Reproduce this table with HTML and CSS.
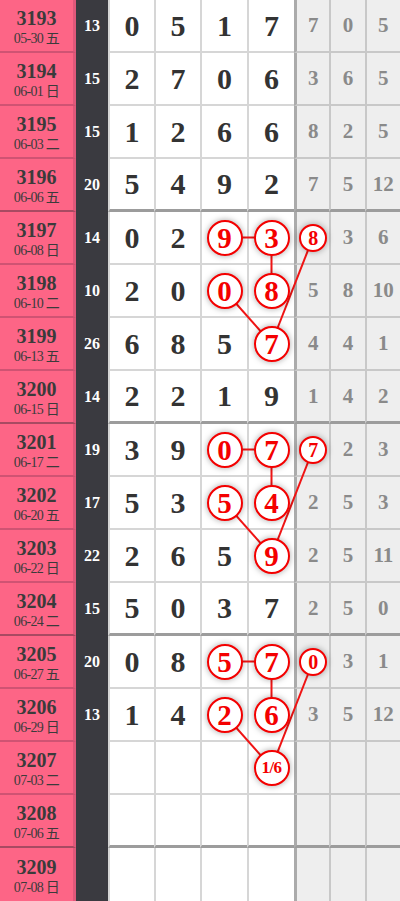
FILE: index.html
```html
<!DOCTYPE html>
<html lang="zh">
<head>
<meta charset="utf-8">
<title>走势图</title>
<link rel="stylesheet" href="styles.css">
</head>
<body>
<div class="board">
  <svg class="links" width="400" height="901" viewBox="0 0 400 901">
    <g stroke="#f01414" stroke-width="2" fill="none">
      <line x1="224.5" y1="237.5" x2="271.5" y2="237.5"/>
      <line x1="271.5" y1="237.5" x2="271.5" y2="290.5"/>
      <line x1="224.5" y1="290.5" x2="271.5" y2="343.5"/>
      <line x1="313" y1="237.5" x2="271.5" y2="343.5"/>
      <line x1="224.5" y1="449.5" x2="271.5" y2="449.5"/>
      <line x1="271.5" y1="449.5" x2="271.5" y2="502.5"/>
      <line x1="224.5" y1="502.5" x2="271.5" y2="555.5"/>
      <line x1="313" y1="449.5" x2="271.5" y2="555.5"/>
      <line x1="224.5" y1="661.5" x2="271.5" y2="661.5"/>
      <line x1="271.5" y1="661.5" x2="271.5" y2="714.5"/>
      <line x1="224.5" y1="714.5" x2="271.5" y2="767.5"/>
      <line x1="313" y1="661.5" x2="271.5" y2="767.5"/>
    </g>
  </svg>

  <div class="row">
    <div class="id"><span class="no">3193</span><span class="dt">05-30 五</span></div>
    <div class="sum">13</div>
    <div class="n">0</div><div class="n">5</div><div class="n">1</div><div class="n">7</div>
    <div class="g first">7</div><div class="g">0</div><div class="g">5</div>
  </div>
  <div class="row">
    <div class="id"><span class="no">3194</span><span class="dt">06-01 日</span></div>
    <div class="sum">15</div>
    <div class="n">2</div><div class="n">7</div><div class="n">0</div><div class="n">6</div>
    <div class="g first">3</div><div class="g">6</div><div class="g">5</div>
  </div>
  <div class="row">
    <div class="id"><span class="no">3195</span><span class="dt">06-03 二</span></div>
    <div class="sum">15</div>
    <div class="n">1</div><div class="n">2</div><div class="n">6</div><div class="n">6</div>
    <div class="g first">8</div><div class="g">2</div><div class="g">5</div>
  </div>
  <div class="row grp">
    <div class="id"><span class="no">3196</span><span class="dt">06-06 五</span></div>
    <div class="sum">20</div>
    <div class="n">5</div><div class="n">4</div><div class="n">9</div><div class="n">2</div>
    <div class="g first">7</div><div class="g">5</div><div class="g">12</div>
  </div>

  <div class="row">
    <div class="id"><span class="no">3197</span><span class="dt">06-08 日</span></div>
    <div class="sum">14</div>
    <div class="n">0</div><div class="n">2</div><div class="n"><span class="ball">9</span></div><div class="n"><span class="ball">3</span></div>
    <div class="g first"><span class="ball sm">8</span></div><div class="g">3</div><div class="g">6</div>
  </div>
  <div class="row">
    <div class="id"><span class="no">3198</span><span class="dt">06-10 二</span></div>
    <div class="sum">10</div>
    <div class="n">2</div><div class="n">0</div><div class="n"><span class="ball">0</span></div><div class="n"><span class="ball">8</span></div>
    <div class="g first">5</div><div class="g">8</div><div class="g">10</div>
  </div>
  <div class="row">
    <div class="id"><span class="no">3199</span><span class="dt">06-13 五</span></div>
    <div class="sum">26</div>
    <div class="n">6</div><div class="n">8</div><div class="n">5</div><div class="n"><span class="ball">7</span></div>
    <div class="g first">4</div><div class="g">4</div><div class="g">1</div>
  </div>
  <div class="row grp">
    <div class="id"><span class="no">3200</span><span class="dt">06-15 日</span></div>
    <div class="sum">14</div>
    <div class="n">2</div><div class="n">2</div><div class="n">1</div><div class="n">9</div>
    <div class="g first">1</div><div class="g">4</div><div class="g">2</div>
  </div>

  <div class="row">
    <div class="id"><span class="no">3201</span><span class="dt">06-17 二</span></div>
    <div class="sum">19</div>
    <div class="n">3</div><div class="n">9</div><div class="n"><span class="ball">0</span></div><div class="n"><span class="ball">7</span></div>
    <div class="g first"><span class="ball sm">7</span></div><div class="g">2</div><div class="g">3</div>
  </div>
  <div class="row">
    <div class="id"><span class="no">3202</span><span class="dt">06-20 五</span></div>
    <div class="sum">17</div>
    <div class="n">5</div><div class="n">3</div><div class="n"><span class="ball">5</span></div><div class="n"><span class="ball">4</span></div>
    <div class="g first">2</div><div class="g">5</div><div class="g">3</div>
  </div>
  <div class="row">
    <div class="id"><span class="no">3203</span><span class="dt">06-22 日</span></div>
    <div class="sum">22</div>
    <div class="n">2</div><div class="n">6</div><div class="n">5</div><div class="n"><span class="ball">9</span></div>
    <div class="g first">2</div><div class="g">5</div><div class="g">11</div>
  </div>
  <div class="row grp">
    <div class="id"><span class="no">3204</span><span class="dt">06-24 二</span></div>
    <div class="sum">15</div>
    <div class="n">5</div><div class="n">0</div><div class="n">3</div><div class="n">7</div>
    <div class="g first">2</div><div class="g">5</div><div class="g">0</div>
  </div>

  <div class="row">
    <div class="id"><span class="no">3205</span><span class="dt">06-27 五</span></div>
    <div class="sum">20</div>
    <div class="n">0</div><div class="n">8</div><div class="n"><span class="ball">5</span></div><div class="n"><span class="ball">7</span></div>
    <div class="g first"><span class="ball sm">0</span></div><div class="g">3</div><div class="g">1</div>
  </div>
  <div class="row">
    <div class="id"><span class="no">3206</span><span class="dt">06-29 日</span></div>
    <div class="sum">13</div>
    <div class="n">1</div><div class="n">4</div><div class="n"><span class="ball">2</span></div><div class="n"><span class="ball">6</span></div>
    <div class="g first">3</div><div class="g">5</div><div class="g">12</div>
  </div>
  <div class="row">
    <div class="id"><span class="no">3207</span><span class="dt">07-03 二</span></div>
    <div class="sum"></div>
    <div class="n"></div><div class="n"></div><div class="n"></div><div class="n"><span class="ball frac">1/6</span></div>
    <div class="g first"></div><div class="g"></div><div class="g"></div>
  </div>
  <div class="row grp">
    <div class="id"><span class="no">3208</span><span class="dt">07-06 五</span></div>
    <div class="sum"></div>
    <div class="n"></div><div class="n"></div><div class="n"></div><div class="n"></div>
    <div class="g first"></div><div class="g"></div><div class="g"></div>
  </div>

  <div class="row last">
    <div class="id"><span class="no">3209</span><span class="dt">07-08 日</span></div>
    <div class="sum"></div>
    <div class="n"></div><div class="n"></div><div class="n"></div><div class="n"></div>
    <div class="g first"></div><div class="g"></div><div class="g"></div>
  </div>
</div>
</body>
</html>
```

FILE: styles.css
```css
* {
  box-sizing: border-box;
}

html, body {
  margin: 0;
  padding: 0;
  background: #ffffff;
}

body {
  font-family: "Liberation Serif", "Noto Sans CJK SC", serif;
  width: 400px;
  height: 901px;
  overflow: hidden;
}

.board {
  position: relative;
  width: 400px;
}

.links {
  position: absolute;
  left: 0;
  top: 0;
  z-index: 1;
}

.row {
  display: grid;
  grid-template-columns: 76px 32px 46px 46px 47px 47px 1fr 1fr 1fr;
  height: 53px;
}

.id {
  background: #fd6586;
  border-right: 3px solid #e0587a;
  border-bottom: 2px solid #cf5373;
  display: flex;
  flex-direction: column;
  align-items: center;
  justify-content: center;
  color: #3b3b3b;
  padding-top: 2px;
}

.no {
  font-size: 20px;
  font-weight: bold;
  line-height: 20px;
}

.dt {
  font-size: 14px;
  line-height: 15px;
  letter-spacing: -0.7px;
  margin-top: 3px;
}

.sum {
  background: #3a3a40;
  color: #ffffff;
  font-size: 16px;
  font-weight: bold;
  display: flex;
  align-items: center;
  justify-content: center;
  padding-bottom: 2px;
}

.n {
  background: #ffffff;
  border-left: 2px solid #d6d6d6;
  border-bottom: 2px solid #d6d6d6;
  display: flex;
  align-items: center;
  justify-content: center;
  font-size: 30px;
  font-weight: bold;
  color: #333333;
}

.g {
  background: #eeeeee;
  border-left: 2px solid #c8c8c8;
  border-bottom: 2px solid #c8c8c8;
  display: flex;
  align-items: center;
  justify-content: center;
  font-size: 21px;
  font-weight: bold;
  color: #8a8a8a;
}

.g.first {
  border-left: 3px solid #ababab;
}

.grp .n,
.grp .g {
  border-bottom: 3px solid #9c9c9c;
}

.grp .id {
  border-bottom: 2px solid #a84a62;
}

.last .n,
.last .g,
.last .id {
  border-bottom: none;
}

.ball {
  position: relative;
  z-index: 2;
  width: 36px;
  height: 36px;
  border-radius: 50%;
  border: 2px solid #f40000;
  background: #ffffff;
  box-shadow: 0 0 6px rgba(0, 0, 0, 0.35);
  color: #f40000;
  font-size: 29px;
  font-weight: bold;
  line-height: 32px;
  text-align: center;
}

.ball.sm {
  width: 28px;
  height: 28px;
  font-size: 20px;
  line-height: 24px;
}

.ball.frac {
  font-size: 17px;
  letter-spacing: -0.5px;
}
```
